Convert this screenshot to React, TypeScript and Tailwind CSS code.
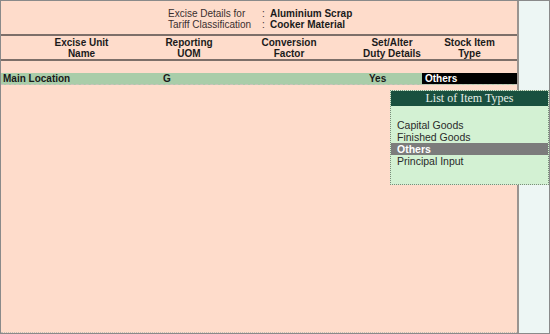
import React from 'react';

const FONT = { fontFamily: '"Liberation Sans", Arial, sans-serif' };

const COLUMNS = [
  { top: 'Excise Unit', bottom: 'Name', width: 'w-[161px]' },
  { top: 'Reporting', bottom: 'UOM', width: 'w-[54px]' },
  { top: 'Conversion', bottom: 'Factor', width: 'w-[146px]' },
  { top: 'Set/Alter', bottom: 'Duty Details', width: 'w-[60px]' },
  { top: 'Stock Item', bottom: 'Type', width: 'flex-1' },
];

const ITEM_TYPES = ['Capital Goods', 'Finished Goods', 'Others', 'Principal Input'];

export default function App() {
  return (
    <div
      className="flex h-[334px] w-[550px] overflow-hidden border border-[#8a8a8a] bg-[#edf6f4] text-[10px] text-[#1a1a1a]"
      style={FONT}
    >
      <div className="relative flex w-[518px] flex-col border-r-2 border-[#9a9490] bg-[#fedccb]">
        <div className="h-[35px] border-b-2 border-[#7d6f69] pt-[7px] leading-[11px]">
          <div className="flex">
            <span className="ml-[167px] w-[94px] text-[#3a2f2f]">Excise Details for</span>
            <span className="w-[8px] text-[#3a2f2f]">:</span>
            <span className="font-bold">Aluminium Scrap</span>
          </div>
          <div className="flex">
            <span className="ml-[167px] w-[94px] text-[#3a2f2f]">Tariff Classification</span>
            <span className="w-[8px] text-[#3a2f2f]">:</span>
            <span className="font-bold">Cooker Material</span>
          </div>
        </div>

        <div className="flex h-[25px] border-b-2 border-[#7d6f69] pt-[1px] font-bold leading-[11px]">
          {COLUMNS.map((column) => (
            <div key={column.top} className={`${column.width} text-center`}>
              <div>{column.top}</div>
              <div>{column.bottom}</div>
            </div>
          ))}
        </div>

        <div className="mt-[12px] flex h-[12px] border-b border-dashed border-[#c9c3bb] bg-[#a9cda9] font-bold leading-[11px]">
          <span className="w-[161px] pl-[2px]">Main Location</span>
          <span className="w-[199px] pl-[1px]">G</span>
          <span className="w-[61px] pl-[8px]">Yes</span>
          <span className="flex-1 bg-black pl-[3px] text-white">Others</span>
        </div>

        <div className="flex-1 border-b border-dotted border-[#c7bdb5]" />

        <div className="absolute left-[389px] top-[89px] w-[159px] border border-dotted border-[#7b8c7b] bg-[#d3f1d3]">
          <div
            className="h-[15px] bg-[#19503f] text-center text-[12px] leading-[15px] text-[#e4eee6]"
            style={{ fontFamily: '"Liberation Serif", "Times New Roman", serif' }}
          >
            List of Item Types
          </div>
          <div className="h-[78px] pt-[13px] text-[10.5px] leading-[12px]">
            {ITEM_TYPES.map((item) =>
              item === 'Others' ? (
                <div key={item} className="bg-[#7c7c7c] pl-[6px] font-bold text-white">
                  {item}
                </div>
              ) : (
                <div key={item} className="pl-[6px] text-[#2a2a2a]">
                  {item}
                </div>
              ),
            )}
          </div>
        </div>
      </div>
      <div className="flex-1" />
    </div>
  );
}
